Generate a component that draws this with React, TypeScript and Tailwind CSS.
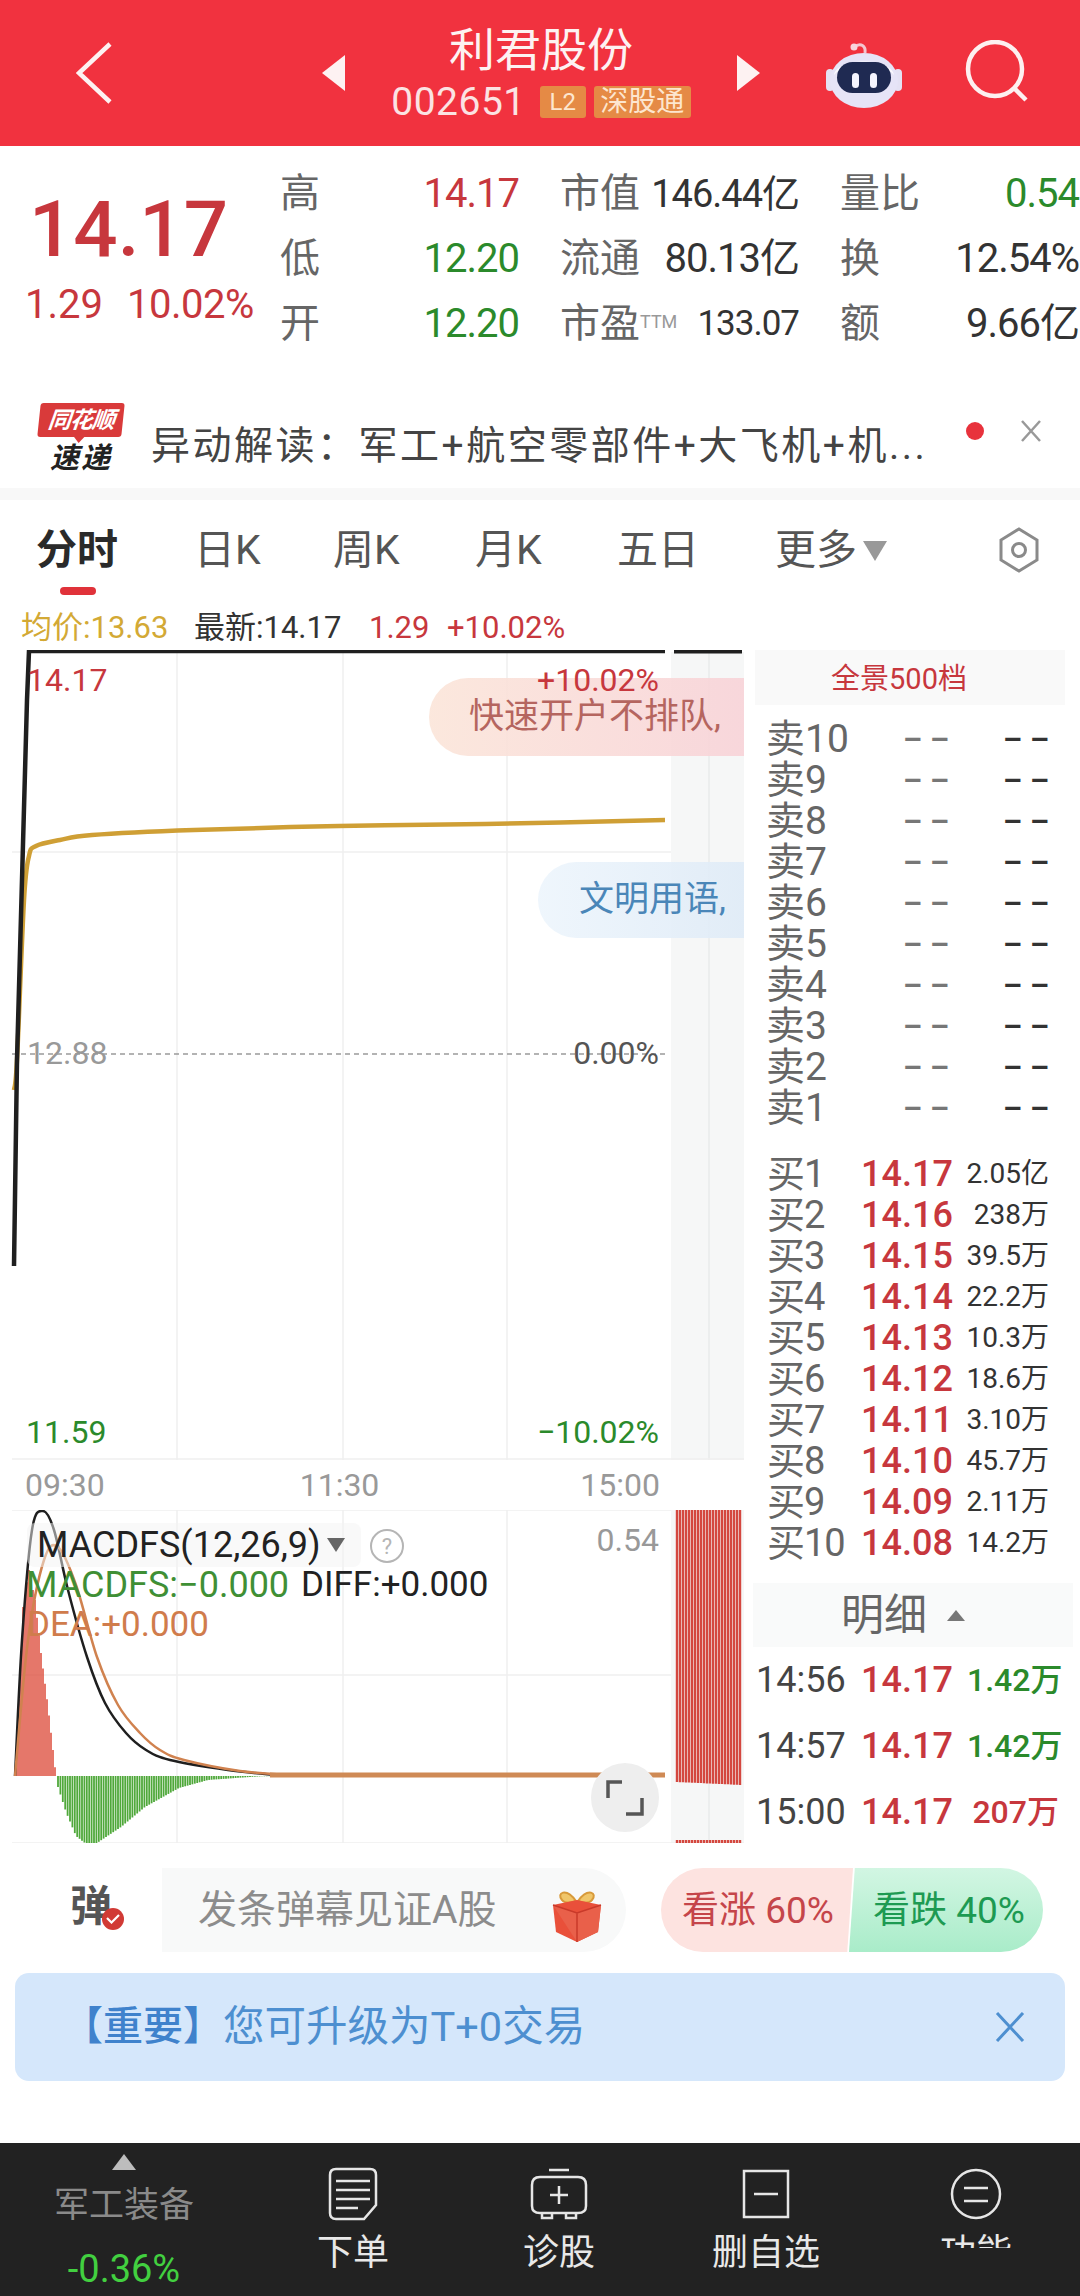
const RED = "text-[#c7373d]";
const GREEN = "text-[#2b8a2b]";

type P = [number, number];
function smooth(pts: P[]): string {
  let d = `M${pts[0][0]} ${pts[0][1]}`;
  for (let i = 0; i < pts.length - 1; i++) {
    const p0 = pts[Math.max(i - 1, 0)];
    const p1 = pts[i];
    const p2 = pts[i + 1];
    const p3 = pts[Math.min(i + 2, pts.length - 1)];
    d += ` C${p1[0] + (p2[0] - p0[0]) / 6} ${p1[1] + (p2[1] - p0[1]) / 6} ${p2[0] - (p3[0] - p1[0]) / 6} ${p2[1] - (p3[1] - p1[1]) / 6} ${p2[0]} ${p2[1]}`;
  }
  return d;
}
function lerp(pts: P[], x: number): number {
  for (let i = 0; i < pts.length - 1; i++) {
    if (x >= pts[i][0] && x <= pts[i + 1][0]) {
      const t = (x - pts[i][0]) / (pts[i + 1][0] - pts[i][0]);
      return pts[i][1] + t * (pts[i + 1][1] - pts[i][1]);
    }
  }
  return 1776;
}
const redShape: P[] = [[15, 1776], [20, 1680], [23, 1607], [29, 1570], [35, 1600], [41, 1653], [48, 1707], [53, 1750], [56, 1776]];
const greenShape: P[] = [[58, 1787], [66, 1812], [76, 1836], [85, 1843], [97, 1843], [121, 1827], [145, 1807], [179, 1788], [208, 1780], [257, 1776.5], [275, 1776]];
const xs = (a: number, b: number, s: number) => {
  const r: number[] = [];
  for (let x = a; x <= b; x += s) r.push(x);
  return r;
};

function PriceChart() {
  return (
    <svg viewBox="0 650 754 810" className="block h-[810px] w-[754px]">
      <rect x="671" y="652" width="73" height="808" fill="#f6f7f7" />
      <path d="M709 652V1460" stroke="#e9ebeb" strokeWidth="1.5" />
      <path d="M177 652V1460M343 652V1460M507 652V1460M12 852H671M12 1459H744" stroke="#f0f0f0" strokeWidth="1.5" />
      <path d="M12 1054H668" stroke="#9a9a9a" strokeWidth="1.5" strokeDasharray="5 4" />
      <path d={smooth([[14, 1090], [17, 1060], [24, 900], [29, 856], [36, 846], [60, 840], [92, 835], [194, 830], [339, 826], [485, 824], [665, 820]])} fill="none" stroke="#cf9f35" strokeWidth="4.5" />
      <path d="M14 1266L17 1060L27 700L29 651H665" fill="none" stroke="#1f1f1f" strokeWidth="4.5" />
      <path d="M674 651H742" stroke="#1f1f1f" strokeWidth="5" />
    </svg>
  );
}

function MacdChart() {
  return (
    <svg viewBox="0 1510 754 333" className="block h-[333px] w-[754px]">
      <rect x="671" y="1510" width="73" height="333" fill="#f6f7f7" />
      <path d="M709 1510V1843" stroke="#e9ebeb" strokeWidth="1.5" />
      <path d="M177 1510V1843M343 1510V1843M507 1510V1843M12 1675H671M12 1843H744M12 1510H671" stroke="#f0f0f0" strokeWidth="1.5" />
      {xs(15, 56, 2).map((x) => (
        <path key={x} d={`M${x} 1776V${lerp(redShape, x)}`} stroke="#dc4a38" strokeWidth="1.5" />
      ))}
      {xs(58, 275, 2.4).map((x) => (
        <path key={x} d={`M${x} 1776V${lerp(greenShape, x)}`} stroke="#4fa83a" strokeWidth="1.8" />
      ))}
      <path d={smooth([[15, 1776], [22, 1640], [32, 1530], [43, 1511], [54, 1530], [68, 1590], [87, 1657], [105, 1703], [126, 1733], [146, 1750], [170, 1760], [228, 1770], [276, 1775]])} fill="none" stroke="#1f1f1f" strokeWidth="2.5" />
      <path d={smooth([[15, 1776], [28, 1640], [44, 1560], [58, 1547], [76, 1585], [97, 1657], [118, 1705], [140, 1733], [160, 1750], [184, 1760], [240, 1771], [290, 1775]])} fill="none" stroke="#d0824f" strokeWidth="2.5" />
      <path d="M270 1775H665" stroke="#cf8a55" strokeWidth="5" />
      {xs(676, 741, 3).map((x) => (
        <g key={x}>
          <path d={`M${x + 1} 1510V${1782 + ((x - 676) / 65) * 3}`} stroke="#d4473f" strokeWidth="2.4" />
          <path d={`M${x + 1} 1840V1843`} stroke="#d4473f" strokeWidth="2.4" />
        </g>
      ))}
    </svg>
  );
}

function Stat({ label, value, color }: { label: React.ReactNode; value: string; color: string }) {
  return (
    <div className="flex w-[239px] items-center justify-between">
      <span className="whitespace-nowrap text-[40px] leading-none text-[#666]">{label}</span>
      <span className={`${color} ${value === "133.07" ? "text-[35px]" : value.length > 6 ? "text-[38px]" : "text-[40px]"} whitespace-nowrap leading-none tracking-[-1px]`}>{value}</span>
    </div>
  );
}

const sells = ["10", "9", "8", "7", "6", "5", "4", "3", "2", "1"];
const buys: [string, string, string][] = [
  ["1", "14.17", "2.05亿"], ["2", "14.16", "238万"], ["3", "14.15", "39.5万"], ["4", "14.14", "22.2万"], ["5", "14.13", "10.3万"],
  ["6", "14.12", "18.6万"], ["7", "14.11", "3.10万"], ["8", "14.10", "45.7万"], ["9", "14.09", "2.11万"], ["10", "14.08", "14.2万"],
];
const details: [string, string, string, string][] = [
  ["14:56", "14.17", "1.42万", GREEN],
  ["14:57", "14.17", "1.42万", GREEN],
  ["15:00", "14.17", "207万", RED],
];

function Stroke({ children, w, h }: { children: React.ReactNode; w: number; h: number }) {
  return (
    <svg width={w} height={h} viewBox={`0 0 ${w} ${h}`} fill="none" stroke="#e6e6e6" strokeWidth="2.5">
      {children}
    </svg>
  );
}

function NavItem({ icon, label, clip }: { icon: React.ReactNode; label: string; clip?: boolean }) {
  return (
    <div className="relative flex flex-col items-center pt-[24px]">
      <div className="flex h-[54px] items-center">{icon}</div>
      <div className="mt-[10px] text-[36px] leading-[44px] text-[#e8e8e8]">{label}</div>
      {clip && <div className="absolute inset-x-0 top-[105px] h-[48px] bg-[#222222]" />}
    </div>
  );
}

export default function App() {
  return (
    <div className="h-[2296px] w-[1080px] overflow-hidden bg-white [font-family:Roboto,'Noto_Sans_CJK_SC',sans-serif]">
      {/* header */}
      <div className="flex h-[146px] items-center bg-[#f1323f] pl-[76px]">
        <svg width="36" height="62" viewBox="0 0 36 62" fill="none" stroke="#fdf2f2" strokeWidth="4.5">
          <path d="M34 2L3 31L34 60" />
        </svg>
        <svg className="ml-[210px]" width="24" height="36" viewBox="0 0 24 36" fill="#fdf2f2"><path d="M23 0V36L0 18Z" /></svg>
        <div className="flex w-[390px] flex-col items-center">
          <div className="text-[46px] leading-[54px] text-[#fdf2f2]">利君股份</div>
          <div className="mt-[4px] flex items-center">
            <span className="text-[39px] leading-[42px] tracking-[0.5px] text-[#fbe3e3]">002651</span>
            <span className="ml-[14px] flex h-[32px] w-[46px] items-center justify-center rounded-[3px] bg-[#e58a45] text-[24px] text-[#fde6cf]">L2</span>
            <span className="ml-[8px] flex h-[32px] w-[97px] items-center justify-center rounded-[3px] bg-[#e58a45] text-[28px] text-[#fde6cf]">深股通</span>
          </div>
        </div>
        <svg width="24" height="36" viewBox="0 0 24 36" fill="#fdf2f2"><path d="M1 0V36L24 18Z" /></svg>
        <svg className="ml-[65px] mt-[6px]" width="78" height="70" viewBox="0 0 78 70">
          <path d="M29 6C36 1 41 5 40 12" fill="none" stroke="#f4c6d0" strokeWidth="3" />
          <circle cx="29" cy="6" r="3.5" fill="#f8d5dc" />
          <rect x="1" y="28" width="8" height="22" rx="4" fill="#e4e2f4" />
          <rect x="69" y="28" width="8" height="22" rx="4" fill="#e4e2f4" />
          <ellipse cx="39" cy="39.5" rx="34" ry="27.5" fill="#e6e4f7" />
          <path d="M9 34C12 16 66 16 69 34C58 20 20 20 9 34Z" fill="#fbfbff" />
          <rect x="12" y="21" width="54" height="31" rx="15.5" fill="#1f2a52" />
          <rect x="27" y="32" width="7" height="15" rx="3.5" fill="#f5f5ff" />
          <rect x="45" y="32" width="7" height="15" rx="3.5" fill="#f5f5ff" />
        </svg>
        <svg className="ml-[62px]" width="66" height="66" viewBox="0 0 66 66" fill="none" stroke="#fdf0f0" strokeWidth="4.5">
          <circle cx="30" cy="29" r="27" />
          <path d="M49 48L61 60" />
        </svg>
      </div>

      {/* stats */}
      <div className="flex h-[244px] pt-[15px]">
        <div className="flex w-[280px] flex-col pl-[29px]">
          <div className="mt-[22px] text-[78px] font-medium leading-[94px] text-[#c7373d]">14.17</div>
          <div className="mt-[6px] flex text-[40px] leading-[44px] text-[#c7373d]">
            <span className="ml-[-4px] w-[102px]">1.29</span>
            <span className="tracking-[-0.5px]">10.02%</span>
          </div>
        </div>
        <div className="flex flex-col">
          {[
            [["高", "14.17", RED], ["市值", "146.44亿", "text-[#333]"], ["量比", "0.54", GREEN]],
            [["低", "12.20", GREEN], ["流通", "80.13亿", "text-[#333]"], ["换", "12.54%", "text-[#333]"]],
            [["开", "12.20", GREEN], ["市盈", "133.07", "text-[#333]"], ["额", "9.66亿", "text-[#333]"]],
          ].map((row, i) => (
            <div key={i} className="flex h-[65px] gap-[41px]">
              {row.map(([l, v, c], j) => (
                <Stat
                  key={j}
                  label={l === "市盈" ? <>市盈<sup className="text-[18px] text-[#999]">TTM</sup></> : l}
                  value={v}
                  color={c}
                />
              ))}
            </div>
          ))}
        </div>
      </div>

      {/* news */}
      <div className="flex h-[98px] items-center">
        <div className="ml-[38px] flex h-[72px] w-[86px] flex-col items-center">
          <div className="relative flex h-[34px] w-[84px] -skew-x-6 items-center justify-center rounded-[3px] bg-[#d93a3a] text-[23px] font-bold italic leading-none tracking-[-1px] text-white">
            同花顺
            <div className="absolute bottom-[-6px] left-[36px] h-0 w-0 border-x-[6px] border-t-[7px] border-x-transparent border-t-[#d93a3a]" />
          </div>
          <div className="mt-[5px] text-[29px] font-bold italic leading-[32px] tracking-[2px] text-[#222]">速递</div>
        </div>
        <div className="ml-[27px] mt-[14px] w-[785px] whitespace-nowrap text-[39px] leading-[48px] tracking-[2.5px] text-[#444]">
          异动解读：军工+航空零部件+大飞机+机...
        </div>
        <div className="mb-[16px] ml-[30px] h-[18px] w-[18px] rounded-full bg-[#e8323c]" />
        <svg className="mb-[16px] ml-[36px]" width="22" height="24" viewBox="0 0 22 24" fill="none" stroke="#999" strokeWidth="2.5">
          <path d="M2 2L20 22M20 2L2 22" />
        </svg>
      </div>
      <div className="h-[12px] bg-[#f8f8f8]" />

      {/* tabs */}
      <div className="relative flex h-[100px] items-start pt-[25px] text-[41px] leading-[50px] text-[#555]">
        <span className="ml-[36px] w-[158px] font-bold text-[#2a2a2a]">分时</span>
        <span className="w-[139px]">日K</span>
        <span className="w-[142px]">周K</span>
        <span className="w-[142px]">月K</span>
        <span className="w-[158px]">五日</span>
        <span className="w-[82px] whitespace-nowrap">更多</span>
        <svg className="ml-[6px] mt-[16px]" width="24" height="20" viewBox="0 0 24 20" fill="#999"><path d="M0 0H24L12 20Z" /></svg>
        <svg className="ml-[108px] mt-[1px]" width="48" height="48" viewBox="0 0 48 48" fill="none" stroke="#8a8a8a" strokeWidth="3">
          <path d="M24 3L42 14V34L24 45L6 34V14Z" />
          <circle cx="24" cy="24" r="6.5" />
        </svg>
        <div className="absolute left-[60px] top-[87px] h-[8px] w-[36px] rounded-full bg-[#e0323a]" />
      </div>

      {/* info row */}
      <div className="flex h-[50px] items-center pl-[21px] pt-[4px] text-[31px] leading-none">
        <span className="w-[173px] whitespace-nowrap text-[#d3a935]">均价:13.63</span>
        <span className="w-[175px] whitespace-nowrap text-[#333]">最新:14.17</span>
        <span className="w-[78px] text-[#c7373d]">1.29</span>
        <span className="text-[#c7373d]">+10.02%</span>
      </div>

      {/* main */}
      <div className="flex h-[1193px]">
        <div className="w-[754px]">
          <div className="relative h-[810px]">
            <PriceChart />
            <div className="absolute left-[429px] top-[28px] flex h-[78px] w-[315px] items-center rounded-l-[39px] bg-gradient-to-r from-[#fbe5d9]/90 to-[#f8d3d8]/90 pl-[40px] text-[35px] text-[#b5655f]">
              快速开户不排队,
            </div>
            <div className="absolute left-[538px] top-[212px] flex h-[76px] w-[206px] items-center rounded-l-[38px] bg-gradient-to-r from-[#edf5fc]/90 to-[#dfebf7]/90 pl-[41px] text-[35px] text-[#4a86b8]">
              文明用语,
            </div>
            <div className={`absolute left-[27px] top-[12px] text-[32px] leading-[36px] ${RED}`}>14.17</div>
            <div className={`absolute right-[95px] top-[12px] text-[32px] leading-[36px] ${RED}`}>+10.02%</div>
            <div className="absolute left-[27px] top-[385px] text-[32px] leading-[36px] text-[#999]">12.88</div>
            <div className="absolute right-[95px] top-[385px] text-[32px] leading-[36px] text-[#555]">0.00%</div>
            <div className={`absolute left-[26px] top-[764px] text-[32px] leading-[36px] ${GREEN}`}>11.59</div>
            <div className={`absolute right-[95px] top-[764px] text-[32px] leading-[36px] ${GREEN}`}>−10.02%</div>
          </div>
          <div className="flex h-[50px] w-[660px] items-center justify-between pl-[25px] text-[32px] leading-none text-[#999]">
            <span>09:30</span>
            <span className="ml-[-6px]">11:30</span>
            <span>15:00</span>
          </div>
          <div className="relative h-[333px]">
            <MacdChart />
            <div className="absolute left-[27px] top-[13px] flex h-[44px] w-[334px] items-center whitespace-nowrap rounded-[8px] bg-[#f4f4f4]/50 pl-[10px] text-[36px] leading-none text-[#222]">
              MACDFS(12,26,9)
              <svg className="ml-[6px]" width="18" height="14" viewBox="0 0 18 14" fill="#666"><path d="M0 0H18L9 14Z" /></svg>
            </div>
            <svg className="absolute left-[369px] top-[18px]" width="36" height="36" viewBox="0 0 36 36" fill="none">
              <circle cx="18" cy="18" r="16" stroke="#b5b5b5" strokeWidth="2" />
              <text x="18" y="26" textAnchor="middle" fontSize="22" fill="#b5b5b5">?</text>
            </svg>
            <div className="absolute right-[95px] top-[12px] text-[32px] leading-[36px] text-[#999]">0.54</div>
            <div className="absolute left-[26px] top-[56px] flex whitespace-nowrap leading-[38px]">
              <span className="w-[275px] text-[36px] text-[#3f8f35]">MACDFS:−0.000</span>
              <span className="text-[35px] text-[#222]">DIFF:+0.000</span>
            </div>
            <div className="absolute left-[27px] top-[96px] text-[35px] leading-[38px] text-[#d07c4c]">DEA:+0.000</div>
            <div className="absolute left-[591px] top-[253px] flex h-[69px] w-[68px] items-center justify-center rounded-full bg-[#eeeeee]">
              <svg width="40" height="38" viewBox="0 0 40 38" fill="none" stroke="#555" strokeWidth="3.5">
                <path d="M17 3H3V19M37 19V35H21" />
              </svg>
            </div>
          </div>
        </div>

        {/* order book */}
        <div className="flex-1">
          <div className="ml-[1px] flex h-[55px] w-[310px] items-center justify-center bg-[#f9f9f9] pr-[22px] pt-[3px] text-[29px] leading-none text-[#c7373d]">
            全景500档
          </div>
          <div className="mt-[14px] flex flex-col pl-[12px]">
            {sells.map((s) => (
              <div key={s} className="flex h-[41px] items-center">
                <span className="w-[137px] text-[39px] leading-none text-[#666]">卖{s}</span>
                <span className="w-[100px] text-[30px] font-bold leading-none tracking-[8px] text-[#777]">––</span>
                <span className="text-[30px] font-bold leading-none tracking-[8px] text-[#333]">––</span>
              </div>
            ))}
          </div>
          <div className="mt-[24px] flex flex-col pl-[13px]">
            {buys.map(([n, p, v]) => (
              <div key={n} className="flex h-[41px] items-center">
                <span className="w-[94px] whitespace-nowrap text-[38px] leading-none tracking-[-1px] text-[#666]">买{n}</span>
                <span className={`w-[90px] text-[36px] font-medium leading-none ${RED}`}>{p}</span>
                <span className="w-[98px] whitespace-nowrap text-right text-[28px] leading-none text-[#333]">{v}</span>
              </div>
            ))}
          </div>
          <div className="ml-[-1px] mt-[20px] flex h-[64px] w-[320px] items-center justify-center bg-[#f9fafa] pr-[20px]">
            <span className="text-[43px] leading-none text-[#666]">明细</span>
            <svg className="ml-[20px]" width="18" height="11" viewBox="0 0 18 11" fill="#777"><path d="M9 0L18 11H0Z" /></svg>
          </div>
          {details.map(([t, p, v, c], i) => (
            <div key={i} className="flex h-[66px] items-center pl-[2px] text-[36px] leading-none">
              <span className="w-[105px] text-[#444]">{t}</span>
              <span className={`w-[106px] font-medium ${RED}`}>{p}</span>
              <span className={`w-[92px] whitespace-nowrap text-right text-[32px] font-medium ${c}`}>{v}</span>
            </div>
          ))}
        </div>
      </div>

      {/* danmaku row */}
      <div className="mt-[25px] flex h-[84px] items-center">
        <div className="relative ml-[70px] h-[56px] w-[92px]">
          <span className="text-[42px] font-bold leading-[50px] text-[#555]">弹</span>
          <div className="absolute left-[32px] top-[26px] flex h-[22px] w-[22px] items-center justify-center rounded-full bg-[#d13a35]">
            <svg width="14" height="10" viewBox="0 0 14 10" fill="none" stroke="#fff" strokeWidth="2.2"><path d="M1 4L5.5 8.5L13 1" /></svg>
          </div>
        </div>
        <div className="flex h-[84px] w-[464px] items-center rounded-r-[42px] bg-[#f8f9f9] pl-[36px]">
          <span className="text-[39px] leading-none text-[#8c8c8c]">发条弹幕见证A股</span>
          <svg className="ml-[56px] mt-[10px]" width="50" height="56" viewBox="0 0 50 56">
            <path d="M24 14C14 0 4 6 10 13C13 17 20 16 24 14ZM26 14C36 0 46 6 40 13C37 17 30 16 26 14Z" fill="#f0c66a" stroke="#d89a3a" strokeWidth="2" />
            <path d="M1 18L25 13L49 18L46 45L25 55L4 45Z" fill="#e9503a" />
            <path d="M1 18L25 26L49 18L46 45L25 55Z" fill="#e9604a" />
            <path d="M25 26V55M1 18L25 26L49 18" fill="none" stroke="#c93a2a" strokeWidth="1.5" />
          </svg>
        </div>
        <div className="ml-[35px] flex h-[84px]">
          <div className="flex w-[192px] items-center whitespace-nowrap rounded-l-[42px] bg-[#fde3e0] pl-[21px] text-[37px] leading-none text-[#c5454a] [clip-path:polygon(0_0,100%_0,97%_100%,0_100%)]">
            看涨 60%
          </div>
          <div className="ml-[-4px] flex w-[194px] items-center whitespace-nowrap rounded-r-[42px] bg-gradient-to-b from-[#d2f6e3] to-[#a9ecc9] pl-[24px] text-[37px] leading-none text-[#1d9a52] [clip-path:polygon(3%_0,100%_0,100%_100%,0_100%)]">
            看跌 40%
          </div>
        </div>
      </div>

      {/* notice */}
      <div className="mx-[15px] mt-[21px] flex h-[108px] items-center justify-between rounded-[14px] bg-[#d5e7fb] pl-[48px] pr-[40px]">
        <div className="flex items-center whitespace-nowrap leading-none text-[#4d8fd0]">
          <span className="text-[40px] font-medium text-[#3f82cc]">【重要】</span>
          <span className="text-[41.5px]">您可升级为T+0交易</span>
        </div>
        <svg width="30" height="30" viewBox="0 0 30 30" fill="none" stroke="#4d8fd0" strokeWidth="3">
          <path d="M2 1L28 29M28 1L2 29" />
        </svg>
      </div>

      {/* bottom bar */}
      <div className="mt-[62px] grid h-[153px] grid-cols-[248px_210px_202px_212px_208px] overflow-hidden bg-[#222222]">
        <div className="flex flex-col items-center pt-[11px]">
          <svg width="24" height="16" viewBox="0 0 24 16" fill="#bdbdbd"><path d="M12 0L24 16H0Z" /></svg>
          <div className="mt-[14px] text-[35px] leading-[44px] text-[#8a8a8a]">军工装备</div>
          <div className="mt-[19px] text-[38px] leading-[44px] text-[#42d040]">-0.36%</div>
        </div>
        <NavItem
          label="下单"
          icon={
            <Stroke w={50} h={54}>
              <path d="M8 2H42Q48 2 48 8V38L36 52H8Q2 52 2 46V8Q2 2 8 2Z" />
              <path d="M8 17H42M8 26H42M8 35H42M8 44H30" transform="translate(0 -3)" />
            </Stroke>
          }
        />
        <NavItem
          label="诊股"
          icon={
            <Stroke w={58} h={52}>
              <path d="M19 2H39M10 9H48Q56 9 56 17V38Q56 45 48 45H10Q2 45 2 38V17Q2 9 10 9ZM12 46V50H22V46M36 46V50H46V46" />
              <path d="M29 18V36M20 27H38" />
            </Stroke>
          }
        />
        <NavItem
          label="删自选"
          icon={
            <Stroke w={48} h={50}>
              <path d="M2 2H46V48H2ZM12 25H36" />
            </Stroke>
          }
        />
        <NavItem
          label="功能"
          clip
          icon={
            <Stroke w={52} h={52}>
              <circle cx="26" cy="26" r="24" />
              <path d="M14 20H38M14 33H38" />
            </Stroke>
          }
        />
      </div>
    </div>
  );
}
